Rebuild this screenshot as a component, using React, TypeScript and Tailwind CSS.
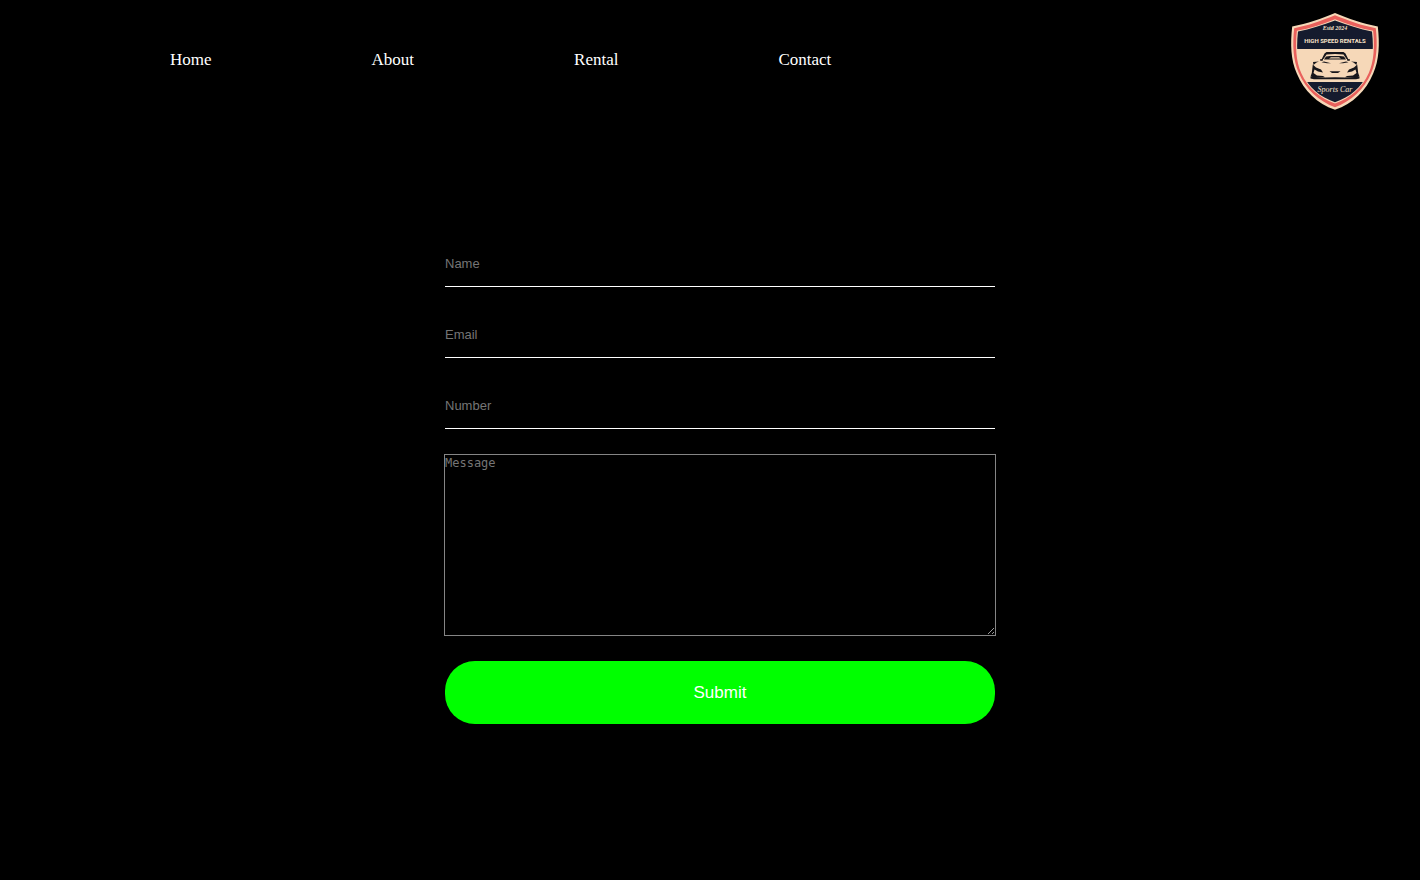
import type { ComponentPropsWithoutRef } from "react";

const links = ["Home", "About", "Rental", "Contact"];

function Logo() {
  return (
    <svg viewBox="0 0 110 110" className="h-[110px] w-[110px] shrink-0" role="img" aria-label="High Speed Rentals">
      <defs>
        <clipPath id="shield">
          <path d="M55 15.600C43 20 30 24.500 18 26.600C16.200 42 17 57 22 68C29 83 40 92 55 97.200C70 92 81 83 88 68C93 57 93.800 42 92 26.600C80 24.500 67 20 55 15.600Z" />
        </clipPath>
        <g id="car-half">
          <path d="M55 47H46.500L44.500 48.500L41.800 54H43.500L46.500 49.500L55 49Z" />
          <path d="M55 51H50L46 51.500L44 54.500H55V53.500H49L51 52.300H55Z" />
          <path d="M40 54.300L43 54V55.500L40.500 56Z" />
          <path d="M41.500 57.200L44 56.500L51 58.300L47 58.200Z" />
          <path d="M33 57L39 56.400L36.500 57.600L33.500 60Z" />
          <path d="M32.800 59.500L36 62.500L41 64.500L43 67.500L38 66.500L34.500 64.500L33.500 68L37 70.500L43 71L45 72.300H33L30.500 71.500L31.800 68Z" />
          <path d="M55 66.300H49.500L52 68H55Z" />
          <path d="M30.500 71.800L45 72.500L55 72.300V74.200H34L30.500 73.500Z" />
        </g>
      </defs>
      <path fill="#f6d8b8" d="M55 8C42 13.500 27 18.800 12.200 21.500C10.200 39 10.800 55 16.800 68.500C24 86 37 98.500 55 104.800C73 98.500 86 86 93.200 68.500C99.200 55 99.800 39 97.800 21.500C83 18.800 68 13.500 55 8Z" />
      <path fill="#e9615c" d="M55 10.300C42 15.500 28 20.800 14.200 23.200C12.400 39.500 13 55 18.800 68C26 84.500 38.500 96 55 102.200C71.500 96 84 84.500 91.200 68C97 55 97.600 39.500 95.800 23.200C82 20.800 68 15.500 55 10.300Z" />
      <path fill="#f6d8b8" d="M55 14.200C43 19 30 23.500 16.900 25.700C15.200 41 16 56.500 21.200 68C28 83.500 40 93.200 55 98.500C70 93.200 82 83.500 88.800 68C94 56.500 94.800 41 93.100 25.700C80 23.500 67 19 55 14.200Z" />
      <g clipPath="url(#shield)" fill="#151b2e">
        <rect x="10" y="10" width="90" height="34" />
        <rect x="10" y="77" width="90" height="28" />
      </g>
      <g fill="#17161b">
        <use href="#car-half" />
        <use href="#car-half" transform="matrix(-1 0 0 1 110 0)" />
      </g>
      <g fill="#f9e2c8" textAnchor="middle">
        <text x="55" y="25" className="font-['Liberation_Serif',serif] text-[6px] font-bold italic">Estd 2024</text>
        <text x="55" y="38" className="font-['Liberation_Sans_Narrow','Roboto',sans-serif] text-[6px] font-bold">HIGH SPEED RENTALS</text>
        <text x="55" y="87" className="font-['Liberation_Serif',serif] text-[8px] italic">Sports Car</text>
      </g>
    </svg>
  );
}

function Field({ label, ...rest }: { label: string } & ComponentPropsWithoutRef<"input">) {
  return (
    <input
      aria-label={label}
      placeholder={label}
      className="block h-[46px] w-full border-b border-white bg-transparent py-[15px] text-[13px] leading-[15px] text-white outline-none placeholder:text-[#757575]"
      {...rest}
    />
  );
}

export default function App() {
  return (
    <div className="min-h-screen bg-black font-['Liberation_Sans',Arial,sans-serif] text-white">
      <header className="flex items-center justify-between py-[5px] pr-[30px] pl-[170px]">
        <nav>
          <ul className="flex gap-40">
            {links.map((link) => (
              <li key={link}>
                <a href={`#${link.toLowerCase()}`} className="block font-['Liberation_Serif','Times_New_Roman',serif] text-[17px] leading-5">
                  {link}
                </a>
              </li>
            ))}
          </ul>
        </nav>
        <Logo />
      </header>
      <main className="flex justify-center pt-[121px] pl-5">
        <form className="flex w-full max-w-[550px] flex-col gap-[25px]" onSubmit={(e) => e.preventDefault()}>
          <Field name="name" label="Name" type="text" />
          <Field name="email" label="Email" type="email" />
          <Field name="number" label="Number" type="tel" />
          <div className="-mx-px">
            <textarea
              name="message"
              aria-label="Message"
              placeholder="Message"
              className="block h-[182px] w-full resize border border-[#858585] bg-transparent font-['DejaVu_Sans_Mono',monospace] text-[12px] leading-4 outline-none placeholder:text-[#757575]"
            />
          </div>
          <button type="submit" className="h-[63px] w-full rounded-[30px] bg-[#00ff00] text-[17px] leading-5 text-white">
            Submit
          </button>
        </form>
      </main>
    </div>
  );
}
